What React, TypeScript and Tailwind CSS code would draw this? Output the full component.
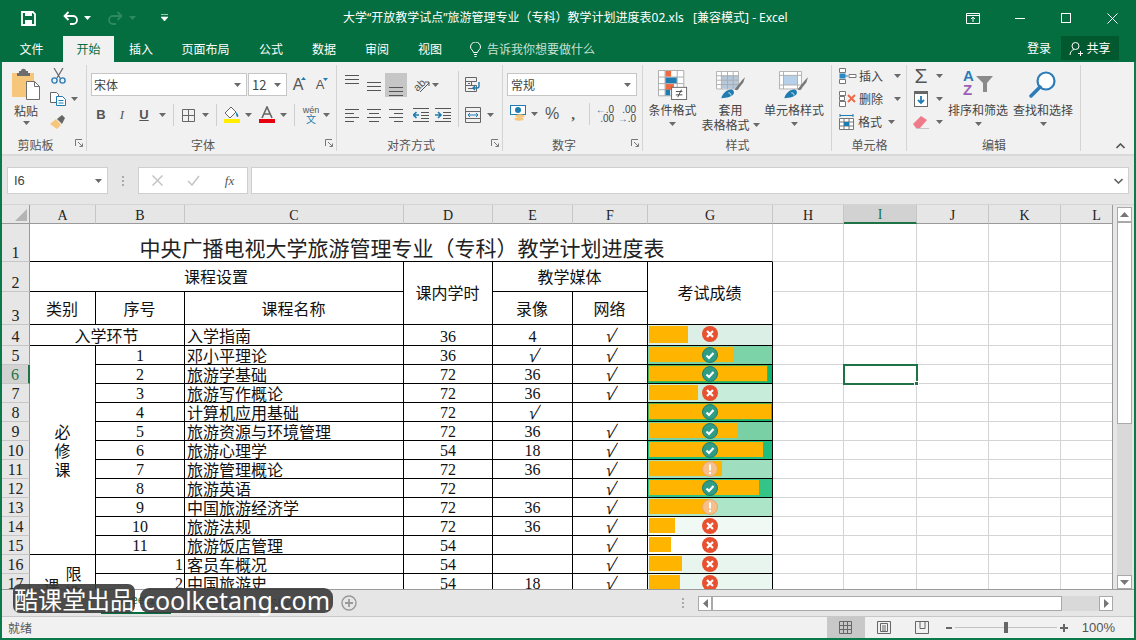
import React from "react";

const Caret = ({ className = "" }: { className?: string }) => (
  <svg width="7" height="4" viewBox="0 0 7 4" className={`shrink-0 ${className}`}>
    <path d="M0 0h7L3.5 4z" fill="#6a6a6a" />
  </svg>
);

const Lines = ({ ys, xs }: { ys: number[]; xs: [number, number][] }) => (
  <svg width="16" height="16" viewBox="0 0 16 16">
    {ys.map((y, i) => (
      <path key={y} d={`M${xs[i][0]} ${y}H${xs[i][1]}`} stroke="#555" strokeWidth="1" />
    ))}
  </svg>
);

const Launcher = () => (
  <svg width="8" height="8" viewBox="0 0 8 8" className="absolute right-[4px] top-[4px]">
    <path d="M.5 7V.5H7M3 3l4 4M4.5 7.5h3v-3" fill="none" stroke="#777" />
  </svg>
);

const Group = ({ w, label, launcher, children }: { w: string; label: string; launcher?: boolean; children: React.ReactNode }) => (
  <div className={`${w} relative shrink-0 h-[92px] flex flex-col`}>
    <div className="h-[73px]">{children}</div>
    <div className={`relative h-[19px] flex items-center justify-center text-[12px] leading-none text-[#555] ${launcher ? "pr-[18px]" : ""}`}>
      {label}
      {launcher && <Launcher />}
    </div>
    <div className="absolute right-0 top-[3px] bottom-[3px] w-px bg-[#d4d4d4]" />
  </div>
);

const Sep = ({ w }: { w: string }) => (
  <div className={`${w} h-[22px] flex justify-center`}>
    <div className="w-px h-full bg-[#cfcfcf]" />
  </div>
);

const Slot = ({ w, children, className = "" }: { w: string; children?: React.ReactNode; className?: string }) => (
  <div className={`${w} h-full flex items-center justify-center shrink-0 ${className}`}>{children}</div>
);

const BigButton = ({ w, icon, lines, caretInline }: { w: string; icon: React.ReactNode; lines: string[]; caretInline?: boolean }) => (
  <div className={`${w} shrink-0 pt-[7px] flex flex-col items-center text-[12px] leading-[15px] text-[#444]`}>
    <div className="h-[32px] mb-[1px] flex items-center justify-center">{icon}</div>
    {lines.map((l, i) => (
      <div key={l} className="flex items-center gap-[3px] whitespace-nowrap">
        {l}
        {caretInline && i === lines.length - 1 && <Caret />}
      </div>
    ))}
    {!caretInline && <Caret className="mt-[5px]" />}
  </div>
);

const CondIcon = () => (
  <svg width="30" height="30" viewBox="0 0 32 32">
    <path d="M.5 .5h27v27H.5zM.5 7.5h27M.5 14.5h27M.5 21h27M7.5 .5v27M20.5 .5v27" fill="#fff" stroke="#a9a9a9" />
    <rect x="8" y="1" width="6" height="6" fill="#ed6a43" />
    <rect x="8" y="8" width="12" height="6" fill="#1f7cb0" />
    <rect x="8" y="15" width="9" height="6" fill="#ed6a43" />
    <rect x="8" y="21" width="5" height="6" fill="#1f7cb0" />
    <rect x="14.5" y="18.5" width="16" height="13" fill="#fff" stroke="#666" />
    <path d="M19 23h7M19 26.5h7M25 21l-4 8" stroke="#444" fill="none" />
  </svg>
);

const TableIcon = ({ fill }: { fill: "grid" | "cell" }) => (
  <svg width="30" height="28" viewBox="0 0 34 32">
    <path d="M.5 .5h25v20H.5z" fill="#fff" stroke="#a9a9a9" />
    {fill === "grid" ? (
      <>
        <rect x="6" y="5" width="19" height="15" fill="#b5c8dc" />
        <path d="M.5 5.5h25M.5 10.5h25M.5 15.5h25M6 .5v20M13 .5v20M19.5 .5v20" stroke="#a9a9a9" />
      </>
    ) : (
      <>
        <rect x="5" y="5" width="16" height="11" fill="#b5d0e8" />
        <path d="M.5 5h25M.5 16h25M5 .5v20M21 .5v20" stroke="#a9a9a9" />
      </>
    )}
    <path d="M21 21l9-11 3-3-2 6-7 9z" fill="#777" />
    <path d="M6 31c1-5 6-10 11-10 3 0 4 3 3 5-1 3-8 5-14 5z" fill="#1f7cb0" />
    <path d="M14 25c2 0 3 1 3 3" stroke="#fff" fill="none" />
  </svg>
);

const InsertIcon = () => (
  <svg width="18" height="16" viewBox="0 0 18 16">
    <path d="M.5 .5h6v4h-6zM.5 11.5h6v4h-6zM10 6.5h7v3h-7z" fill="#fff" stroke="#777" />
    <path d="M.5 5.5h6v5h-6z" fill="#2b88c4" />
    <path d="M9 8H3M5 6L3 8l2 2" stroke="#2b88c4" fill="none" />
  </svg>
);

const DeleteIcon = () => (
  <svg width="18" height="16" viewBox="0 0 18 16">
    <path d="M.5 .5h6v4h-6zM.5 10.5h6v5h-6zM.5 5.5h5v4h-5z" fill="#fff" stroke="#777" />
    <path d="M9 4l7 7M16 4l-7 7" stroke="#ee6a4a" strokeWidth="2" />
  </svg>
);

const FormatIcon = () => (
  <svg width="16" height="16" viewBox="0 0 16 16">
    <path d="M.5 4.5h14v11H.5zM.5 8h14M.5 12h14M5 4.5v11M10 4.5v11" fill="#fff" stroke="#777" />
    <rect x="5" y="8" width="5" height="4" fill="#1f7cb0" />
    <path d="M1 1.5h13M1 0v3M14 0v3" stroke="#1f7cb0" />
  </svg>
);

const colLabels = ["A", "B", "C", "D", "E", "F", "G", "H", "I", "J", "K", "L"];

const courses = [
  { row: "5", seq: "1", name: "邓小平理论", d: "36", e: "√", f: "√", bar: 84, bg: "bg-[#7dd3a8]", icon: "ok" },
  { row: "6", seq: "2", name: "旅游学基础", d: "72", e: "36", f: "√", bar: 118, bg: "bg-[#12b774]", icon: "ok", edge: true },
  { row: "7", seq: "3", name: "旅游写作概论", d: "72", e: "36", f: "√", bar: 49, bg: "bg-[#c8ecda]", icon: "no" },
  { row: "8", seq: "4", name: "计算机应用基础", d: "72", e: "√", f: "", bar: 122, bg: "bg-[#12b774]", icon: "ok", edge: true },
  { row: "9", seq: "5", name: "旅游资源与环境管理", d: "72", e: "36", f: "√", bar: 89, bg: "bg-[#78d0a4]", icon: "ok" },
  { row: "10", seq: "6", name: "旅游心理学", d: "54", e: "18", f: "√", bar: 114, bg: "bg-[#20bd80]", icon: "ok" },
  { row: "11", seq: "7", name: "旅游管理概论", d: "72", e: "36", f: "√", bar: 73, bg: "bg-[#9fdfbf]", icon: "warn" },
  { row: "12", seq: "8", name: "旅游英语", d: "72", e: "", f: "√", bar: 110, bg: "bg-[#34c488]", icon: "ok" },
  { row: "13", seq: "9", name: "中国旅游经济学", d: "72", e: "36", f: "√", bar: 60, bg: "bg-[#ace5c8]", icon: "warn" },
  { row: "14", seq: "10", name: "旅游法规", d: "72", e: "36", f: "√", bar: 26, bg: "bg-[#f1f9f5]", icon: "no" },
  { row: "15", seq: "11", name: "旅游饭店管理", d: "54", e: "", f: "√", bar: 22, bg: "bg-white", icon: "no" },
];

const Badge = ({ kind }: { kind: string }) => (
  <svg width="16" height="16" viewBox="0 0 16 16" className="absolute left-[54px] top-[1px]">
    {kind === "no" && (
      <>
        <circle cx="8" cy="8" r="8" fill="#e8502f" />
        <path d="M5 5l6 6M11 5l-6 6" stroke="#fff" strokeWidth="2.2" />
      </>
    )}
    {kind === "ok" && (
      <>
        <circle cx="8" cy="8" r="7.5" fill="#2f9c85" stroke="#1f7f6c" />
        <path d="M4.5 8.5l2.5 2.5 4.5-5" stroke="#fff" strokeWidth="2.2" fill="none" />
      </>
    )}
    {kind === "warn" && (
      <>
        <circle cx="8" cy="8" r="7.5" fill="#f7c08a" stroke="#e8a766" />
        <path d="M8 3.5v6M8 11v2" stroke="#fff" strokeWidth="2" />
      </>
    )}
  </svg>
);

const Score = ({ bar, bg, icon, edge }: { bar: number; bg: string; icon: string; edge?: boolean }) => (
  <div className={`relative h-full border-r border-b border-black pl-[1px] pt-[1px] pb-[2px] ${bg}`}>
    <div
      className={`h-full bg-[#ffb400] ${edge ? "outline outline-1 outline-[#4caf50]" : ""}`}
      style={{ width: bar }}
    />
    <Badge kind={icon} />
  </div>
);

const box = "border-r border-b border-black flex justify-center";
const line = `${box} items-end leading-[17px]`;
const mid = `${box} items-center pr-[1px]`;
const digit = `${box} items-end leading-[16px] [font-family:'Liberation_Serif','Noto_Sans_CJK_SC',serif] text-[16px]`;
const num = "[font-family:'Liberation_Serif','Noto_Sans_CJK_SC',serif] text-[16px]";
const empties = ["H", "I", "J", "K", "L"];

const Tick = () => (
  <span className="inline-block w-[10px] h-[17px] ml-[2px] overflow-hidden -skew-x-[16deg] [font-family:'Liberation_Sans',sans-serif] text-[18px] leading-[18px]">√</span>
);

const Mark = ({ v }: { v: string }) => (v === "√" ? <Tick /> : <>{v}</>);

const Empty = ({ row, col }: { row: number; col: string }) => {
  if (row === 6 && col === "I") {
    return (
      <div className="relative outline-2 -outline-offset-1 outline-[#1f7246] z-10 border-r border-b border-transparent">
        <div className="absolute -right-[3px] -bottom-[3px] w-[5px] h-[5px] bg-[#1f7246] border border-white" />
      </div>
    );
  }
  return <div className="border-b border-r border-[#d4d4d4]" />;
};

const RowHead = ({ n }: { n: string }) => (
  <div
    className={`border-b border-[#c6c6c6] flex items-end justify-center leading-[17px] ${num} ${
      n === "6" ? "bg-[#d2d2d2] text-[#1f7246] border-r-2 border-r-[#1f7246]" : "bg-[#e6e6e6] text-[#222] border-r border-r-[#9a9a9a]"
    }`}
  >
    {n}
  </div>
);

function Sheet() {
  return (
    <div className="w-[1111px] h-[384px] overflow-hidden border-r border-[#9a9a9a] grid grid-cols-[28px_66px_89px_219px_89px_80px_75px_125px_71px_73px_72px_72px_72px] grid-rows-[19px_38px_30px_33px_21px_repeat(13,19px)] bg-white text-[16px] text-[#111]">
      <div className="bg-[#e6e6e6] border-r border-b border-[#9a9a9a] relative">
        <svg width="12" height="12" viewBox="0 0 12 12" className="absolute right-[2px] bottom-[2px]">
          <path d="M12 0v12H0z" fill="#b4b4b4" />
        </svg>
      </div>
      {colLabels.map((c) => (
        <div
          key={c}
          className={`flex items-center justify-center pt-[2px] border-r border-[#c6c6c6] border-b [font-family:'Liberation_Serif',serif] text-[14px] ${
            c === "I" ? "bg-[#d2d2d2] text-[#1f7246] border-b-2 border-b-[#1f7246]" : "bg-[#e6e6e6] text-[#222] border-b-[#9a9a9a]"
          }`}
        >
          {c}
        </div>
      ))}

      <RowHead n="1" />
      <div className="col-span-7 border-b border-r border-b-black border-r-[#d4d4d4] flex items-end justify-center pl-[2px] text-[21px] leading-[28px] text-[#222]">
        中央广播电视大学旅游管理专业（专科）教学计划进度表
      </div>
      {empties.map((c) => <Empty key={c} row={1} col={c} />)}

      <RowHead n="2" />
      <div className={`col-span-3 pb-[2px] ${mid}`}>课程设置</div>
      <div className={`row-span-2 pb-[2px] ${mid}`}>课内学时</div>
      <div className={`col-span-2 pb-[2px] ${mid}`}>教学媒体</div>
      <div className={`row-span-2 pb-[3px] ${mid}`}>考试成绩</div>
      {empties.map((c) => <Empty key={c} row={2} col={c} />)}

      <RowHead n="3" />
      <div className={mid}>类别</div>
      <div className={mid}>序号</div>
      <div className={mid}>课程名称</div>
      <div className={mid}>录像</div>
      <div className={mid}>网络</div>
      {empties.map((c) => <Empty key={c} row={3} col={c} />)}

      <RowHead n="4" />
      <div className={`col-span-2 ${mid}`}>入学环节</div>
      <div className={`${box} items-center justify-start pl-[2px]`}>入学指南</div>
      <div className={digit}>36</div>
      <div className={digit}>4</div>
      <div className={mid}><Tick /></div>
      <Score bar={39} bg="bg-[#dcefe6]" icon="no" />
      {empties.map((c) => <Empty key={c} row={4} col={c} />)}

      {courses.map((r, i) => (
        <React.Fragment key={r.seq}>
          <RowHead n={r.row} />
          {i === 0 && (
            <div className="row-span-11 border-r border-b border-black flex flex-col items-center justify-center leading-[19px]">
              <span>必</span>
              <span>修</span>
              <span>课</span>
            </div>
          )}
          <div className={digit}>{r.seq}</div>
          <div className={`${line} justify-start pl-[2px] whitespace-nowrap`}>{r.name}</div>
          <div className={digit}>{r.d}</div>
          <div className={digit}><Mark v={r.e} /></div>
          <div className={line}><Mark v={r.f} /></div>
          <Score bar={r.bar} bg={r.bg} icon={r.icon} edge={r.edge} />
          {empties.map((c) => <Empty key={c} row={Number(r.row)} col={c} />)}
        </React.Fragment>
      ))}

      <RowHead n="16" />
      <div className="row-span-2 border-r border-b border-black flex justify-center gap-[6px] leading-[19px]">
        <span className="mt-[21px]">课</span>
        <div className="mt-[9px] flex flex-col">
          <span>限</span>
          <span>选</span>
        </div>
      </div>
      <div className={`${digit} justify-end pr-[1px]`}>1</div>
      <div className={`${line} justify-start pl-[2px]`}>客员车概况</div>
      <div className={digit}>54</div>
      <div className={line} />
      <div className={line}><Tick /></div>
      <Score bar={33} bg="bg-[#e8f5ee]" icon="no" />
      {empties.map((c) => <Empty key={c} row={16} col={c} />)}

      <RowHead n="17" />
      <div className={`${digit} justify-end pr-[1px]`}>2</div>
      <div className={`${line} justify-start pl-[2px]`}>中国旅游史</div>
      <div className={digit}>54</div>
      <div className={digit}>18</div>
      <div className={line}><Tick /></div>
      <Score bar={31} bg="bg-[#eaf7f0]" icon="no" />
      {empties.map((c) => <Empty key={c} row={17} col={c} />)}
    </div>
  );
}

const Ribbon = () => (
  <div className="h-[94px] bg-[#f1f1f1] border-b-2 border-[#d9d9d9] flex text-[#444]">
    <Group w="w-[85px]" label="剪贴板" launcher>
      <div className="flex pl-[8px]">
        <div className="w-[32px] pt-[6px] flex flex-col items-center text-[12px] leading-[15px]">
          <svg width="30" height="32" viewBox="0 0 30 32">
            <path d="M1 5h22v24H1z" fill="#f6c67a" />
            <path d="M8 5V3h2c0-3 5-3 5 0h2v2h2v3H6V5z" fill="#6d6d6d" />
            <path d="M15.5 13.5h8l5 5v13h-13z" fill="#fff" stroke="#6d6d6d" />
            <path d="M23.5 13.5v5h5" fill="none" stroke="#6d6d6d" />
          </svg>
          <div className="mt-[3px]">粘贴</div>
          <Caret className="mt-[3px]" />
        </div>
        <div className="ml-[6px] w-[32px] pt-[2px] flex flex-col">
          <div className="h-[23px] flex items-center pl-[3px]">
            <svg width="15" height="16" viewBox="0 0 15 16">
              <path d="M3 0l6 10M12 0L6 10" stroke="#666" strokeWidth="1.2" />
              <circle cx="3.5" cy="12.5" r="2.6" fill="none" stroke="#2b7cb8" strokeWidth="1.4" />
              <circle cx="11.5" cy="12.5" r="2.6" fill="none" stroke="#2b7cb8" strokeWidth="1.4" />
            </svg>
          </div>
          <div className="h-[23px] flex items-center gap-[5px] pl-[2px]">
            <svg width="16" height="14" viewBox="0 0 16 14">
              <path d="M.5 .5h6l2 2v8h-8z" fill="#fff" stroke="#666" />
              <path d="M6.5 4.5h6l3 3v6h-9z" fill="#fff" stroke="#1f7cb0" />
              <path d="M8.5 8.5h5M8.5 11h5" stroke="#1f7cb0" />
            </svg>
            <Caret />
          </div>
          <div className="h-[23px] flex items-center pl-[2px]">
            <svg width="16" height="15" viewBox="0 0 16 15">
              <path d="M0 10l6-5 5 6-4 4z" fill="#f6c67a" />
              <path d="M7 5l5-4 3 3-3 6z" fill="#666" />
            </svg>
          </div>
        </div>
      </div>
    </Group>

    <Group w="w-[250px]" label="字体" launcher>
      <div className="pl-[4px] pt-[11px] flex flex-col gap-[8px]">
        <div className="flex h-[23px]">
          <div className="w-[156px] bg-white border border-[#c6c6c6] flex items-center justify-between pl-[2px] pr-[5px] text-[12px]">
            宋体
            <Caret />
          </div>
          <div className="ml-[1px] w-[39px] bg-white border border-[#c6c6c6] flex items-center justify-between pl-[3px] pr-[5px] text-[13px]">
            12
            <Caret />
          </div>
          <Slot w="w-[22px]">
            <span className="relative text-[16px] leading-none text-[#555] [font-family:'Liberation_Sans',sans-serif]">
              A
              <svg width="5" height="3" viewBox="0 0 5 3" className="absolute -right-[3px] top-0"><path d="M0 3h5L2.5 0z" fill="#1f7cb0" /></svg>
            </span>
          </Slot>
          <Slot w="w-[22px]">
            <span className="relative text-[13px] leading-none text-[#555] [font-family:'Liberation_Sans',sans-serif]">
              A
              <svg width="5" height="3" viewBox="0 0 5 3" className="absolute -right-[4px] top-0"><path d="M0 0h5L2.5 3z" fill="#1f7cb0" /></svg>
            </span>
          </Slot>
        </div>
        <div className="flex h-[22px] items-center [font-family:'Liberation_Serif',serif] text-[13px] text-[#555]">
          <Slot w="w-[20px]"><b className="[font-family:'Liberation_Sans',sans-serif]">B</b></Slot>
          <Slot w="w-[22px]"><i>I</i></Slot>
          <Slot w="w-[22px]"><b className="underline [font-family:'Liberation_Sans',sans-serif]">U</b></Slot>
          <Slot w="w-[14px]"><Caret /></Slot>
          <Sep w="w-[9px]" />
          <Slot w="w-[20px]">
            <svg width="13" height="13" viewBox="0 0 13 13"><path d="M.5 .5h12v12H.5zM6.500 .5v12M.5 6.500h12" fill="none" stroke="#666" /></svg>
          </Slot>
          <Slot w="w-[14px]"><Caret /></Slot>
          <Sep w="w-[8px]" />
          <Slot w="w-[24px]">
            <svg width="16" height="18" viewBox="0 0 16 18">
              <path d="M7 1L1 7l5 5 6-6z" fill="#fff" stroke="#666" />
              <path d="M12 6c2 2 3 4 2 5-2 0-2-3-2-5z" fill="#1f7cb0" />
              <rect y="13" width="16" height="4" fill="#ffee00" />
            </svg>
          </Slot>
          <Slot w="w-[8px]"><Caret /></Slot>
          <div className="w-[3px]" />
          <Slot w="w-[24px]">
            <svg width="16" height="18" viewBox="0 0 16 18">
              <path d="M3 12L8 1l5 11M5 8h6" fill="none" stroke="#666" strokeWidth="1.6" />
              <rect y="13" width="16" height="4" fill="#e60012" />
            </svg>
          </Slot>
          <Slot w="w-[8px]"><Caret /></Slot>
          <Sep w="w-[14px]" />
          <Slot w="w-[20px]">
            <div className="flex flex-col items-center leading-[9px] [font-family:'Liberation_Sans','Noto_Sans_CJK_SC',sans-serif] text-[9px]">
              <span>wén</span>
              <span className="text-[#1f7cb0] text-[10px]">文</span>
            </div>
          </Slot>
          <Slot w="w-[10px]"><Caret /></Slot>
        </div>
      </div>
    </Group>

    <Group w="w-[166px]" label="对齐方式" launcher>
      <div className="flex">
        <div className="w-[121px] pl-[4px] pt-[11px] flex flex-col gap-[7px]">
          <div className="flex h-[24px]">
            <Slot w="w-[22px]" className="items-start pt-[0px]">
              <Lines ys={[2.5, 6.5, 10.5]} xs={[[1, 15], [1, 15], [1, 15]]} />
            </Slot>
            <Slot w="w-[22px]">
              <Lines ys={[5.5, 9.5, 13.5]} xs={[[1, 15], [1, 15], [1, 15]]} />
            </Slot>
            <Slot w="w-[22px]" className="bg-[#c6c6c6] items-end">
              <Lines ys={[6.5, 10.5, 14.5]} xs={[[1, 15], [1, 15], [1, 15]]} />
            </Slot>
            <div className="w-[3px]" />
            <Slot w="w-[22px]">
              <svg width="18" height="18" viewBox="0 0 18 18">
                <text x="1" y="13" fontSize="11" fill="#555" transform="rotate(-45 7 9)" fontFamily="Liberation Sans">ab</text>
                <path d="M8 16L17 7M13 6h4v4" fill="none" stroke="#555" />
              </svg>
            </Slot>
            <Slot w="w-[6px]"><Caret /></Slot>
          </div>
          <div className="flex h-[22px]">
            <Slot w="w-[22px]"><Lines ys={[2.5, 6.5, 10.5, 14.5]} xs={[[1, 15], [1, 10], [1, 15], [1, 10]]} /></Slot>
            <Slot w="w-[22px]"><Lines ys={[2.5, 6.5, 10.5, 14.5]} xs={[[1, 15], [3, 13], [1, 15], [3, 13]]} /></Slot>
            <Slot w="w-[22px]"><Lines ys={[2.5, 6.5, 10.5, 14.5]} xs={[[1, 15], [6, 15], [1, 15], [6, 15]]} /></Slot>
            <div className="w-[3px]" />
            <Slot w="w-[22px]">
              <svg width="16" height="16" viewBox="0 0 16 16">
                <path d="M0 1.500h16M0 14.500h16M8 5.500h8M8 8.500h8M8 11.500h8" stroke="#555" />
                <path d="M6 8H1M3.500 5L.5 8l3 3" stroke="#1f7cb0" strokeWidth="1.6" fill="none" />
              </svg>
            </Slot>
            <Slot w="w-[22px]">
              <svg width="16" height="16" viewBox="0 0 16 16">
                <path d="M0 1.500h16M0 14.500h16M8 5.500h8M8 8.500h8M8 11.500h8" stroke="#555" />
                <path d="M0 8h5M3 5l3 3-3 3" stroke="#1f7cb0" strokeWidth="1.6" fill="none" />
              </svg>
            </Slot>
          </div>
        </div>
        <div className="w-px h-[56px] mt-[9px] bg-[#cfcfcf]" />
        <div className="pl-[6px] pt-[11px] flex flex-col gap-[7px]">
          <div className="flex h-[24px] items-center">
            <svg width="17" height="16" viewBox="0 0 17 16">
              <path d="M.5 .5h11v4H.5zM.5 4.500h6v4h-6zM.5 8.500h11v6H.5z" fill="none" stroke="#666" />
              <path d="M3 6.500h2M3 11.500h5" stroke="#666" />
              <path d="M14 5v4a2 2 0 0 1-2 2H8M10 9l-2 2 2 2" stroke="#1f7cb0" strokeWidth="1.4" fill="none" />
            </svg>
          </div>
          <div className="flex h-[22px] items-center">
            <svg width="16" height="16" viewBox="0 0 16 16">
              <path d="M.5 .5h15v15H.5zM.5 4.500h15M.5 11.500h15" fill="none" stroke="#666" />
              <path d="M3 8h10M5 6L3 8l2 2M11 6l2 2-2 2" stroke="#1f7cb0" fill="none" />
            </svg>
            <Caret className="ml-[6px]" />
          </div>
        </div>
      </div>
    </Group>

    <Group w="w-[140px]" label="数字" launcher>
      <div className="pl-[4px] pt-[11px] flex flex-col gap-[7px]">
        <div className="w-[130px] h-[23px] bg-white border border-[#c6c6c6] flex items-center justify-between pl-[3px] pr-[5px] text-[12px]">
          常规
          <Caret />
        </div>
        <div className="flex h-[22px] items-center">
          <Slot w="w-[22px]">
            <svg width="17" height="18" viewBox="0 0 17 18">
              <rect x=".5" y=".5" width="15" height="9" fill="#fff" stroke="#1f7cb0" />
              <circle cx="8" cy="5" r="3" fill="#1f7cb0" />
              <ellipse cx="10" cy="11" rx="4.500" ry="1.700" fill="#f6c67a" />
              <ellipse cx="9" cy="14" rx="4.500" ry="1.700" fill="#f6c67a" />
            </svg>
          </Slot>
          <Slot w="w-[10px]"><Caret /></Slot>
          <Slot w="w-[26px]"><span className="text-[16px] text-[#555] [font-family:'Liberation_Sans',sans-serif]">%</span></Slot>
          <Slot w="w-[16px]"><b className="text-[15px] text-[#555] [font-family:'Liberation_Serif',serif]">,</b></Slot>
          <Sep w="w-[16px]" />
          <Slot w="w-[16px]">
            <div className="flex flex-col items-end leading-[9px] text-[10px] text-[#444] [font-family:'Liberation_Sans',sans-serif]">
              <span><span className="text-[#1f7cb0]">←</span>.0</span>
              <span>.00</span>
            </div>
          </Slot>
          <div className="w-[6px]" />
          <Slot w="w-[16px]">
            <div className="flex flex-col items-end leading-[9px] text-[10px] text-[#444] [font-family:'Liberation_Sans',sans-serif]">
              <span>.00</span>
              <span><span className="text-[#1f7cb0]">→</span>.0</span>
            </div>
          </Slot>
        </div>
      </div>
    </Group>

    <Group w="w-[189px]" label="样式">
      <div className="flex">
        <BigButton w="w-[59px]" icon={<CondIcon />} lines={["条件格式"]} />
        <BigButton w="w-[57px]" icon={<TableIcon fill="grid" />} lines={["套用", "表格格式"]} caretInline />
        <BigButton w="w-[70px]" icon={<TableIcon fill="cell" />} lines={["单元格样式"]} />
      </div>
    </Group>

    <Group w="w-[75px]" label="单元格">
      <div className="pl-[7px] pt-[2px] flex flex-col text-[12px]">
        <div className="h-[23px] flex items-center gap-[2px]"><InsertIcon />插入<Caret className="ml-[9px]" /></div>
        <div className="h-[23px] flex items-center gap-[2px]"><DeleteIcon />删除<Caret className="ml-[9px]" /></div>
        <div className="h-[23px] flex items-center gap-[3px]"><FormatIcon />格式<Caret className="ml-[3px]" /></div>
      </div>
    </Group>

    <Group w="w-[174px]" label="编辑">
      <div className="flex">
        <div className="w-[39px] pl-[5px] pt-[2px] flex flex-col">
          <div className="h-[23px] flex items-center gap-[6px]">
            <span className="w-[18px] text-center text-[21px] leading-none text-[#555] [font-family:'Liberation_Sans',sans-serif]">Σ</span>
            <Caret />
          </div>
          <div className="h-[23px] flex items-center gap-[6px]">
            <svg width="18" height="16" viewBox="0 0 14 16" className="w-[18px]">
              <rect x=".5" y=".5" width="13" height="15" fill="#fff" stroke="#666" />
              <rect x="0" y="0" width="14" height="3" fill="#666" />
              <path d="M7 5v7M4 9l3 3 3-3" stroke="#1f7cb0" strokeWidth="1.8" fill="none" />
            </svg>
            <Caret />
          </div>
          <div className="h-[23px] flex items-center gap-[6px]">
            <svg width="18" height="14" viewBox="0 0 18 14">
              <path d="M1 9l8-8 6 4-7 8H4z" fill="#ef7a8a" />
              <path d="M4 14h13" stroke="#999" />
            </svg>
            <Caret />
          </div>
        </div>
        <BigButton
          w="w-[64px]"
          icon={
            <div className="relative w-[30px] h-[32px] [font-family:'Liberation_Sans',sans-serif] text-[15px] font-bold leading-[14px]">
              <div className="text-[#2b7cb8]">A</div>
              <div className="text-[#9b5fb5]">Z</div>
              <svg width="17" height="16" viewBox="0 0 17 16" className="absolute right-0 top-[7px]">
                <path d="M0 0h17l-6 7v9H7V7z" fill="#8a8a8a" />
              </svg>
            </div>
          }
          lines={["排序和筛选"]}
        />
        <div className="w-[1px]" />
        <BigButton
          w="w-[64px]"
          icon={
            <svg width="28" height="28" viewBox="0 0 28 28">
              <circle cx="17" cy="10" r="8.500" fill="#fff" stroke="#2b7cb8" strokeWidth="2.200" />
              <path d="M11 16L2 25" stroke="#2b7cb8" strokeWidth="3.500" strokeLinecap="round" />
            </svg>
          }
          lines={["查找和选择"]}
        />
      </div>
    </Group>

    <div className="flex-1 flex items-end justify-end pr-[9px] pb-[5px]">
      <svg width="9" height="6" viewBox="0 0 9 6"><path d="M.5 5l4-4 4 4" fill="none" stroke="#555" strokeWidth="1.600" /></svg>
    </div>
  </div>
);

export default function App() {
  return (
    <div className="relative w-[1136px] h-[640px] overflow-hidden bg-[#046e40] flex flex-col [font-family:'Noto_Sans_CJK_SC',sans-serif]">
      <div className="h-[36px] flex items-center text-white">
        <div className="w-[343px] flex items-center">
          <Slot w="w-[56px]">
            <svg width="15" height="15" viewBox="0 0 15 15">
              <path d="M1 1h11l2 2v11H1z" fill="none" stroke="#fff" strokeWidth="1.800" />
              <rect x="4" y="1" width="7" height="4" fill="#fff" />
              <rect x="4" y="9" width="7" height="5" fill="#fff" />
            </svg>
          </Slot>
          <div className="ml-[7px] flex items-center gap-[5px]">
            <svg width="16" height="14" viewBox="0 0 16 14">
              <path d="M2 5h8a4 4 0 0 1 0 8H7M5.500 1L1.500 5l4 4" fill="none" stroke="#fff" strokeWidth="1.800" />
            </svg>
            <Caret className="[&_path]:fill-white" />
          </div>
          <div className="ml-[16px] flex items-center gap-[6px]">
            <svg width="16" height="14" viewBox="0 0 16 14">
              <path d="M14 5H6a4 4 0 0 0 0 8h3M10.500 1l4 4-4 4" fill="none" stroke="#2d8a60" strokeWidth="1.800" />
            </svg>
            <Caret className="[&_path]:fill-[#2d8a60]" />
          </div>
          <svg width="7" height="8" viewBox="0 0 7 8" className="ml-[25px]">
            <path d="M0 .5h7M0 3h7L3.500 7z" stroke="#fff" strokeWidth=".6" fill="#fff" />
          </svg>
        </div>
        <div className="text-[12px] whitespace-pre [font-family:'Noto_Sans','Noto_Sans_CJK_SC',sans-serif]">大学“开放教学试点”旅游管理专业（专科）教学计划进度表02.xls   [兼容模式] - Excel</div>
        <div className="ml-auto flex items-center pr-[1px]">
          <Slot w="w-[46px]" className="h-[36px]">
            <svg width="14" height="11" viewBox="0 0 14 11">
              <path d="M.5 .5h13v10H.5zM.5 2.500h13M7 9V4M5 6l2-2 2 2" fill="none" stroke="#fff" />
            </svg>
          </Slot>
          <Slot w="w-[47px]" className="h-[36px]"><div className="w-[10px] h-px bg-white" /></Slot>
          <Slot w="w-[46px]" className="h-[36px]"><div className="w-[10px] h-[10px] border border-white" /></Slot>
          <Slot w="w-[46px]" className="h-[36px]">
            <svg width="11" height="11" viewBox="0 0 11 11"><path d="M.5 .5l10 10M10.500 .5l-10 10" stroke="#fff" /></svg>
          </Slot>
        </div>
      </div>

      <div className="h-[26px] flex items-center text-white text-[12px]">
        <Slot w="w-[63px]">文件</Slot>
        <Slot w="w-[51px]" className="bg-[#f1f1f1] text-[#046e40]">开始</Slot>
        <Slot w="w-[54px]">插入</Slot>
        <Slot w="w-[75px]">页面布局</Slot>
        <Slot w="w-[56px]">公式</Slot>
        <Slot w="w-[50px]">数据</Slot>
        <Slot w="w-[56px]">审阅</Slot>
        <Slot w="w-[50px]">视图</Slot>
        <div className="ml-[15px] flex items-center gap-[6px] text-[#c8e0d4]">
          <svg width="11" height="15" viewBox="0 0 11 15">
            <path d="M3.500 10.500C3 8 .5 7.500 .5 5a5 5 0 0 1 10 0c0 2.500-2.500 3-3 5.500zM4 12.500h3M4.500 14.500h2" fill="none" stroke="#fff" />
          </svg>
          告诉我你想要做什么
        </div>
        <div className="ml-auto flex items-center self-start pr-[17px]">
          <span className="mr-[10px]">登录</span>
          <div className="w-[58px] h-[24px] bg-[#03592f] flex items-center justify-center gap-[2px]">
            <svg width="15" height="15" viewBox="0 0 15 15">
              <circle cx="6.500" cy="5" r="3.500" fill="none" stroke="#fff" />
              <path d="M1 14c0-3 2-5 4-5.500M9 12.500h5M11.500 10v5" fill="none" stroke="#fff" />
            </svg>
            共享
          </div>
        </div>
      </div>

      <div className="flex-1 border-x-2 border-b-2 border-[#0a7a4a] flex flex-col min-h-0">
        <Ribbon />

        <div className="h-[49px] bg-[#e6e6e6] pt-[11px] pl-[5px] flex items-start gap-[3px] border-b border-[#d4d4d4]">
          <div className="w-[101px] h-[27px] bg-white border border-[#cfcfcf] flex items-center justify-between pl-[6px] pr-[5px] text-[13px] text-[#444] [font-family:'Liberation_Sans',sans-serif]">
            I6
            <Caret />
          </div>
          <div className="w-[24px] h-[27px] flex flex-col items-center justify-center gap-[2px]">
            <span className="w-[2px] h-[2px] bg-[#aaa]" />
            <span className="w-[2px] h-[2px] bg-[#aaa]" />
            <span className="w-[2px] h-[2px] bg-[#aaa]" />
          </div>
          <div className="w-[110px] h-[27px] bg-white border border-[#cfcfcf] flex items-center">
            <Slot w="w-[36px]">
              <svg width="11" height="11" viewBox="0 0 11 11"><path d="M.5 .5l10 10M10.500 .5l-10 10" stroke="#c4c4c4" strokeWidth="1.500" /></svg>
            </Slot>
            <Slot w="w-[37px]">
              <svg width="13" height="11" viewBox="0 0 13 11"><path d="M1 6l4 4 7-9" fill="none" stroke="#c4c4c4" strokeWidth="1.500" /></svg>
            </Slot>
            <Slot w="w-[35px]"><i className="text-[13px] text-[#555] [font-family:'Liberation_Serif',serif]">fx</i></Slot>
          </div>
          <div className="w-[878px] h-[27px] bg-white border border-[#cfcfcf] flex items-center justify-end pr-[5px]">
            <svg width="9" height="6" viewBox="0 0 9 6"><path d="M.5 1l4 4 4-4" fill="none" stroke="#666" strokeWidth="1.600" /></svg>
          </div>
        </div>

        <div className="h-[384px] flex bg-[#e6e6e6]">
          <Sheet />
          <div className="ml-[4px] mt-[2px] w-[15px] flex flex-col bg-[#d9d9d9]">
            <div className="h-[15px] bg-white border border-[#a9a9a9] flex items-center justify-center">
              <svg width="9" height="5" viewBox="0 0 9 5"><path d="M0 5h9L4.500 0z" fill="#777" /></svg>
            </div>
            <div className="h-[202px] bg-white border border-[#a9a9a9]" />
            <div className="flex-1" />
            <div className="h-[14px] bg-white border border-[#a9a9a9] flex items-center justify-center">
              <svg width="9" height="5" viewBox="0 0 9 5"><path d="M0 0h9L4.500 5z" fill="#777" /></svg>
            </div>
          </div>
        </div>

        <div className="h-[28px] bg-[#e6e6e6] border-t border-[#9a9a9a] border-b border-b-[#c8c8c8] flex items-center text-[12px] text-[#666]">
          <div className="ml-[99px] w-[70px] h-[24px] self-start bg-white border-b-2 border-[#046e40] text-center text-[#046e40]">Sheet1</div>
          <div className="w-[80px] text-center">Sheet2</div>
          <div className="w-[78px] text-center">Sheet3</div>
          <svg width="16" height="16" viewBox="0 0 16 16" className="ml-[12px]">
            <circle cx="8" cy="8" r="7" fill="none" stroke="#999" strokeWidth="1.400" />
            <path d="M4 8h8M8 4v8" stroke="#999" strokeWidth="1.800" />
          </svg>
          <div className="ml-[325px] flex flex-col gap-[2px]">
            <span className="w-[2px] h-[2px] bg-[#aaa]" />
            <span className="w-[2px] h-[2px] bg-[#aaa]" />
            <span className="w-[2px] h-[2px] bg-[#aaa]" />
          </div>
          <div className="ml-[14px] w-[415px] h-[15px] flex bg-[#d9d9d9]">
            <div className="w-[14px] bg-white border border-[#a9a9a9] flex items-center justify-center">
              <svg width="5" height="9" viewBox="0 0 5 9"><path d="M5 0v9L0 4.500z" fill="#777" /></svg>
            </div>
            <div className="w-[350px] bg-white border border-[#a9a9a9]" />
            <div className="flex-1" />
            <div className="w-[14px] bg-white border border-[#a9a9a9] flex items-center justify-center">
              <svg width="5" height="9" viewBox="0 0 5 9"><path d="M0 0v9L5 4.500z" fill="#777" /></svg>
            </div>
          </div>
        </div>

        <div className="flex-1 bg-[#f1f1f1] flex items-center text-[12px] text-[#555]">
          <span className="pl-[6px]">就绪</span>
          <div className="ml-auto flex items-center h-full pr-[4px]">
            <Slot w="w-[38px]" className="bg-[#c8c8c8]">
              <svg width="13" height="13" viewBox="0 0 13 13"><path d="M.5 .5h12v12H.5zM4.500 .5v12M8.500 .5v12M.5 4.500h12M.5 8.500h12" fill="none" stroke="#666" /></svg>
            </Slot>
            <Slot w="w-[38px]">
              <svg width="14" height="13" viewBox="0 0 14 13"><path d="M.5 .5h13v12H.5zM3.500 2.500h7v8h-7zM5 5h4M5 7h4M5 9h4" fill="none" stroke="#666" /></svg>
            </Slot>
            <Slot w="w-[38px]">
              <svg width="14" height="13" viewBox="0 0 14 13"><path d="M.5 .5h13v12H.5zM5 .5v7h5v-7" fill="none" stroke="#666" /></svg>
            </Slot>
            <div className="ml-[5px] w-[6px] h-[2px] bg-[#666]" />
            <div className="ml-[3px] w-[102px] h-px bg-[#c4c4c4] flex items-center justify-center">
              <div className="w-[4px] h-[11px] shrink-0 bg-[#666]" />
            </div>
            <div className="relative ml-[3px] w-[8px] h-[2px] bg-[#666]">
              <div className="absolute left-[3px] -top-[3px] w-[2px] h-[8px] bg-[#666]" />
            </div>
            <span className="ml-[14px] mr-[15px] text-[13px] [font-family:'Liberation_Sans',sans-serif]">100%</span>
          </div>
        </div>
      </div>

      <div className="absolute left-[13px] top-[584px] flex items-center gap-[5px] text-white">
        <div className="h-[29px] w-[122px] rounded-[7px] bg-[#3a3a3a]/90 flex items-center justify-center text-[24px] leading-none">酷课堂出品</div>
        <div className="h-[25px] w-[193px] mt-[3px] rounded-[9px] bg-[#3a3a3a]/90 flex items-center justify-center text-[25px] leading-none [font-family:'Noto_Sans',sans-serif]">coolketang.com</div>
      </div>
    </div>
  );
}
